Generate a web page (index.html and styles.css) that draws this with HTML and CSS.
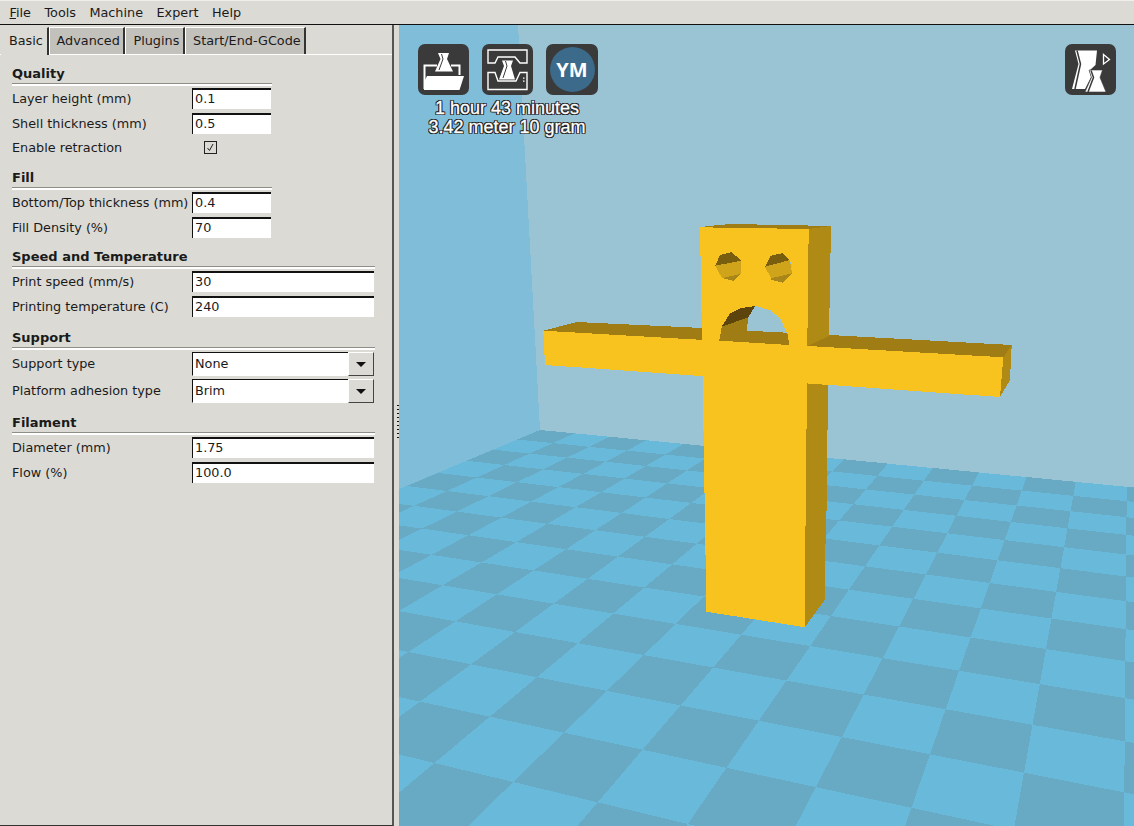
FILE: index.html
```html
<!DOCTYPE html>
<html lang="en">
<head>
    <meta charset="UTF-8">
    <title>Cura</title>
    <link rel="stylesheet" href="styles.css">
</head>
<body>
    <div class="menubar">
        <span class="menu-item"><u>F</u>ile</span>
        <span class="menu-item">Tools</span>
        <span class="menu-item">Machine</span>
        <span class="menu-item">Expert</span>
        <span class="menu-item">Help</span>
    </div>
    <div class="main">
        <div class="sidebar">
            <div class="tabs">
                <div class="tab active">Basic</div>
                <div class="tab">Advanced</div>
                <div class="tab">Plugins</div>
                <div class="tab">Start/End-GCode</div>
            </div>
            <div class="settings">
                <!-- Quality -->
                <div class="section narrow">
                    <div class="section-title">Quality</div>
                    <div class="row">
                        <label>Layer height (mm)</label>
                        <input type="text" value="0.1">
                    </div>
                    <div class="row">
                        <label>Shell thickness (mm)</label>
                        <input type="text" value="0.5">
                    </div>
                    <div class="row check-row">
                        <label>Enable retraction</label>
                        <span class="checkbox">
                            <svg width="11" height="11" viewBox="0 0 11 11"><path d="M2.5 6 L4.5 8.5 L8 2" fill="none" stroke="#222" stroke-width="1"/></svg>
                        </span>
                    </div>
                </div>
                <!-- Fill -->
                <div class="section narrow tight">
                    <div class="section-title">Fill</div>
                    <div class="row">
                        <label>Bottom/Top thickness (mm)</label>
                        <input type="text" value="0.4">
                    </div>
                    <div class="row">
                        <label>Fill Density (%)</label>
                        <input type="text" value="70">
                    </div>
                </div>
                <!-- Speed and Temperature -->
                <div class="section">
                    <div class="section-title">Speed and Temperature</div>
                    <div class="row">
                        <label>Print speed (mm/s)</label>
                        <input type="text" value="30">
                    </div>
                    <div class="row">
                        <label>Printing temperature (C)</label>
                        <input type="text" value="240">
                    </div>
                </div>
                <!-- Support -->
                <div class="section support">
                    <div class="section-title">Support</div>
                    <div class="row combo-row">
                        <label>Support type</label>
                        <div class="combo">
                            <input type="text" value="None">
                            <span class="combo-btn"><i class="arrow"></i></span>
                        </div>
                    </div>
                    <div class="row combo-row">
                        <label>Platform adhesion type</label>
                        <div class="combo">
                            <input type="text" value="Brim">
                            <span class="combo-btn"><i class="arrow"></i></span>
                        </div>
                    </div>
                </div>
                <!-- Filament -->
                <div class="section">
                    <div class="section-title">Filament</div>
                    <div class="row">
                        <label>Diameter (mm)</label>
                        <input type="text" value="1.75">
                    </div>
                    <div class="row">
                        <label>Flow (%)</label>
                        <input type="text" value="100.0">
                    </div>
                </div>
            </div>
        </div>
        <div class="sash"><span class="sash-dots"></span></div>
        <div class="viewport">
            <svg class="scene" viewBox="399 25 735 801" shape-rendering="crispEdges">
                <rect class="wall-left" x="399" y="25" width="735" height="801"/>
                <polygon class="wall-back" points="518,25 1134,25 1134,488 540,430"/>
                <polygon class="tile-light" points="540,430 1134,487.5 1134,826 399,826 399,489"/>
                <g id="floor-tiles" class="tile-dark"></g>

                <!-- body -->
                <polygon class="side" points="805,380 828,380 827.5,431 827,495 825,560 824.7,600 805,627"/>
                <polygon class="front" points="703,375 807.3,375 807,429 806,429 806,526 805,526 805,627.3 706,611.7 706,555 705,555 705,493 704,493 704,431 703,431"/>

                <!-- arm tops, then head -->
                <polygon class="top" points="543.3,330.7 576.7,322 702,328 702,341"/>
                <polygon class="top" points="807.3,346 830,335 1011.7,345 1003.3,357.3"/>
                <polygon class="side" points="1003.3,357.3 1011.7,345 1010,380 1000,397"/>
                <polygon class="top" points="708,226 730,224 798.7,225.3 831,226 808.7,229 700,227.3"/>
                <polygon class="side" points="808.7,229 831,226 829,336 807.3,346"/>
                <polygon class="front" points="700,227.3 808.7,229 807.3,346 702,341"/>
                <polygon class="front" points="543.3,330.7 1003.3,357.3 1000,397 545,365"/>

                <!-- eyes -->
                <polygon class="eye-mid" points="715.3,265.7 741,260.7 741,273.7 722,278.3"/>
                <polygon class="eye-top" points="720,255 731.7,252 741,260.7 715.3,265.7"/>
                <polygon class="eye-low" points="722,278.3 741,273.7 734,281 722.7,278.3"/>
                <polygon class="eye-mid" points="765,266.7 790,260 792,273.3 771,278.3"/>
                <polygon class="eye-top" points="770.7,255.7 782.3,253.3 790,260 765,266.7"/>
                <polygon class="eye-low" points="771,278.3 792,273.3 782.7,282.7 771.7,280"/>
                <polygon class="wall-back" points="789.3,260 792,265 792,269.3"/>

                <!-- mouth -->
                <polygon class="wall-back" points="755,306 770,310 780,318.3 787.3,333.3 787.3,345 746,336 746.7,317"/>
                <polygon class="mouth-dark" points="721.7,326.7 730,313.3 740,308.3 755,306 748.3,317.3"/>
                <polygon class="top" points="721.7,326.7 748.3,317.3 746.7,330.7 719.3,340.7"/>
                <polygon class="top" points="719.3,340.7 746.7,330.7 787.3,332.7 789.3,345"/>
            </svg>
            <div class="toolbar">
                <div class="tool-row">
                    <span class="tool-btn">
                        <svg width="51" height="51" viewBox="0 0 51 51">
                            <path d="M20 9 H31 L29 15 L35 27.5 H17 L22.5 15 Z" fill="#fff"/>
                            <path d="M23.5 10 L25 15 L21 26" fill="none" stroke="#3a3a3a" stroke-width="1"/>
                            <path d="M19 21.5 H6.5 V45 M33 21.5 H41.5 V31" fill="none" stroke="#fff" stroke-width="2"/>
                            <path d="M9 32 H46 L41.5 46 H6 V38 Z" fill="#fff"/>
                        </svg>
                    </span>
                    <span class="tool-btn">
                        <svg width="51" height="51" viewBox="0 0 51 51">
                            <path d="M6 6 H45 V19 H38 L33 13 H16 L13 19 H6 Z M6 28.5 H13 L16 37 H34 L38 28.5 H45 V45.5 H6 Z" fill="none" stroke="#fff" stroke-width="1.4"/>
                            <path d="M20 16.5 H31 L29 22 L33 35.5 H17 L22 22 Z" fill="#fff"/>
                            <path d="M23.5 17 L25 22 L21 34" fill="none" stroke="#3a3a3a" stroke-width="1"/>
                            <path d="M41 33.5 h1.5 v1.3 h-1.5 Z M41 36.5 h1.5 v1.3 h-1.5 Z" fill="#fff"/>
                        </svg>
                    </span>
                    <span class="tool-btn ym-btn"><span class="ym">YM</span></span>
                </div>
                <div class="print-info">
                    <div>1 hour 43 minutes</div>
                    <div>3.42 meter 10 gram</div>
                </div>
            </div>
            <span class="tool-btn view-btn">
                <svg width="51" height="51" viewBox="0 0 51 51">
                    <path d="M10 6.5 H32 L30.5 21 L25 26 H24 L26 33 L20 45 H7 L13.5 20 Z" fill="#fff"/>
                    <path d="M12 6.5 L15.5 20 L10 45" fill="none" stroke="#3a3a3a" stroke-width="1.5"/>
                    <path d="M24 26 H37.5 L35 33.5 L41 48 H20 L26.5 33.5 Z" fill="#fff" stroke="#3a3a3a" stroke-width="0.6"/>
                    <path d="M26 26.5 L28.5 33.5 L23 48" fill="none" stroke="#3a3a3a" stroke-width="1.5"/>
                    <path d="M38.5 10.5 L44.5 15.5 L38.5 20 Z" fill="#3a3a3a" stroke="#fff" stroke-width="1.3"/>
                </svg>
            </span>
        </div>
    </div>
    <script src="floor.js"></script>
</body>
</html>
```

FILE: styles.css
```css
* {
    box-sizing: border-box;
}

html, body {
    height: 100%;
}

body {
    margin: 0;
    display: flex;
    flex-direction: column;
    overflow: hidden;
    font-family: 'DejaVu Sans', sans-serif;
    font-size: 12.8px;
    color: #1a1a1a;
    background-color: #dcdad5;
}

.menubar {
    height: 25px;
    display: flex;
    align-items: center;
    padding: 0 0 0 2.75px;
    border-top: 1px solid #efeeeb;
    border-bottom: 1px solid #111;
}

.menu-item {
    padding: 0 6.75px;
}

.main {
    flex: 1;
    display: flex;
    min-height: 0;
}

.sidebar {
    width: 394px;
    display: flex;
    flex-direction: column;
    border-right: 2px solid #555;
    border-bottom: 1px solid #333;
}

.tabs {
    display: flex;
    height: 30px;
    padding-top: 2px;
    padding-left: 1px;
    align-items: flex-end;
    border-bottom: 1px solid #fff;
}

.tab {
    height: 27px;
    line-height: 26px;
    padding: 0 3.7px 0 7px;
    background-color: #c3c1bc;
    border-top: 1px solid #fff;
    border-left: 1px solid #fff;
    border-right: 2px solid #333;
    text-align: center;
}

.tab.active {
    height: 28px;
    margin-bottom: -1px;
    line-height: 25px;
    padding: 0 3.7px 1px 7px;
    background-color: #dcdad5;
    border-top-color: #dcdad5;
    border-left-color: #dcdad5;
}

.settings {
    flex: 1;
    padding: 11px 17px 0 12px;
}

.section {
    margin-bottom: 13px;
}

.section.tight {
    margin-bottom: 11px;
}

.section.support {
    margin-bottom: 12px;
}

.section.narrow {
    width: 260px;
}

.section-title {
    height: 17px;
    line-height: 15px;
    font-size: 13px;
    font-weight: bold;
}

.section-title::after {
    content: "";
    display: block;
    height: 2px;
    margin-top: 2px;
    background-color: #fff;
    border-top: 1px solid #8f8d88;
}

.row {
    display: flex;
    align-items: center;
    height: 21px;
    margin-top: 4px;
    margin-right: 1px;
}

.section-title + .row {
    margin-top: 5px;
}

.row label {
    width: 180px;
    flex: none;
    white-space: nowrap;
}

.check-row {
    height: 20px;
    margin-top: 3px;
}

.combo-row {
    height: 24px;
    margin-top: 3px;
}

.combo-row label {
    padding-bottom: 2px;
}

input[type="text"] {
    flex: 1;
    min-width: 0;
    height: 21px;
    padding: 0 0 2px 2px;
    background-color: #fff;
    border: 0;
    border-top: 2px solid #111;
    border-left: 1px solid #111;
    font-family: 'DejaVu Sans', sans-serif;
    font-size: 12.8px;
    color: #1a1a1a;
    outline: none;
}

.checkbox {
    width: 13px;
    height: 13px;
    margin-left: 12px;
    background-color: #dcdad5;
    border: 1px solid #222;
    display: flex;
}

.combo {
    flex: 1;
    min-width: 0;
    display: flex;
    height: 24px;
}

.combo input[type="text"] {
    height: 24px;
    padding: 0 0 1px 2px;
    border-top-width: 1px;
    border-bottom: 1px solid #fff;
}

.combo-btn {
    width: 26px;
    flex: none;
    display: flex;
    align-items: center;
    justify-content: center;
    border: 1px solid #fff;
    border-right: 1px solid #444;
    border-bottom: 1px solid #444;
}

.arrow {
    width: 0;
    height: 0;
    border-left: 5px solid transparent;
    border-right: 5px solid transparent;
    border-top: 5px solid #111;
}

.sash {
    width: 5px;
    display: flex;
    align-items: center;
    justify-content: flex-end;
}

.sash-dots {
    width: 2px;
    height: 33px;
    margin-bottom: 8px;
    background-image: repeating-linear-gradient(to bottom, #111 0, #111 1px, transparent 1px, transparent 4px);
}

.viewport {
    flex: 1;
    position: relative;
    background-color: #80bdd9;
}

.scene {
    display: block;
    width: 735px;
    height: 801px;
}

.wall-left { fill: #80bdd9; }
.wall-back { fill: #9ac3d4; }
.tile-light { fill: #68b9da; }
.tile-dark { fill: #68a9c4; }
.front { fill: #f8c31e; }
.side { fill: #af8b15; }
.top { fill: #a07c14; }
.eye-top { fill: #7a5e10; }
.eye-mid { fill: #cfa41a; }
.eye-low { fill: #a9861a; }
.mouth-dark { fill: #5c440c; }

.toolbar {
    position: absolute;
    left: 19px;
    top: 19px;
}

.tool-row {
    display: flex;
    gap: 13px;
}

.tool-btn {
    display: block;
    width: 51px;
    height: 51px;
    background-color: #3a3a3a;
    border-radius: 7px;
}

.ym-btn {
    display: flex;
    align-items: center;
    justify-content: center;
    width: 52px;
}

.ym {
    width: 45px;
    height: 45px;
    border-radius: 50%;
    background-color: #3b6a8a;
    color: #fff;
    font-family: 'Open Sans', sans-serif;
    font-weight: 700;
    font-size: 20px;
    line-height: 45px;
    text-align: center;
}

.print-info {
    margin-top: 4px;
    width: 178px;
    text-align: center;
    font-family: 'Liberation Sans', sans-serif;
    font-size: 18px;
    line-height: 19px;
    color: #fff;
    -webkit-text-stroke: 0.3px #fff;
    text-shadow: 1px 0 0 #222, -1px 0 0 #222, 0 1px 0 #222, 0 -1px 0 #222, 1px 1px 0 #222, -1px -1px 0 #222, 1px -1px 0 #222, -1px 1px 0 #222;
}

.view-btn {
    position: absolute;
    left: 666px;
    top: 19px;
}
```

FILE: floor.js
```js
// checkerboard floor, grid coords mapped to screen with a homography
var refs = [
    [0, 0, 540, 430],
    [14, 0, 1126.7, 486.7],
    [5, 11, 408.3, 652],
    [13, 11, 1024, 772.7]
];

function solve(a) {
    var n = a.length;
    for (var i = 0; i < n; i++) {
        var p = i;
        for (var r = i + 1; r < n; r++) {
            if (Math.abs(a[r][i]) > Math.abs(a[p][i])) p = r;
        }
        var t = a[i]; a[i] = a[p]; a[p] = t;
        for (var r = 0; r < n; r++) {
            if (r === i) continue;
            var f = a[r][i] / a[i][i];
            for (var c = i; c <= n; c++) a[r][c] -= f * a[i][c];
        }
    }
    return a.map(function (row, i) { return row[n] / row[i]; });
}

var rows = [];
refs.forEach(function (q) {
    rows.push([q[0], q[1], 1, 0, 0, 0, -q[0] * q[2], -q[1] * q[2], q[2]]);
    rows.push([0, 0, 0, q[0], q[1], 1, -q[0] * q[3], -q[1] * q[3], q[3]]);
});
var h = solve(rows);

function project(u, v) {
    var w = h[6] * u + h[7] * v + 1;
    return { x: (h[0] * u + h[1] * v + h[2]) / w, y: (h[3] * u + h[4] * v + h[5]) / w, w: w };
}

var tiles = document.getElementById("floor-tiles");
for (var u = 0; u < 26; u++) {
    for (var v = 0; v < 26; v++) {
        if ((u + v) % 2 !== 0) continue;
        var corners = [project(u, v), project(u + 1, v), project(u + 1, v + 1), project(u, v + 1)];
        if (corners.some(function (c) { return c.w <= 0.02; })) continue;
        var poly = document.createElementNS("http://www.w3.org/2000/svg", "polygon");
        poly.setAttribute("points", corners.map(function (c) { return c.x.toFixed(1) + "," + c.y.toFixed(1); }).join(" "));
        tiles.appendChild(poly);
    }
}
```
